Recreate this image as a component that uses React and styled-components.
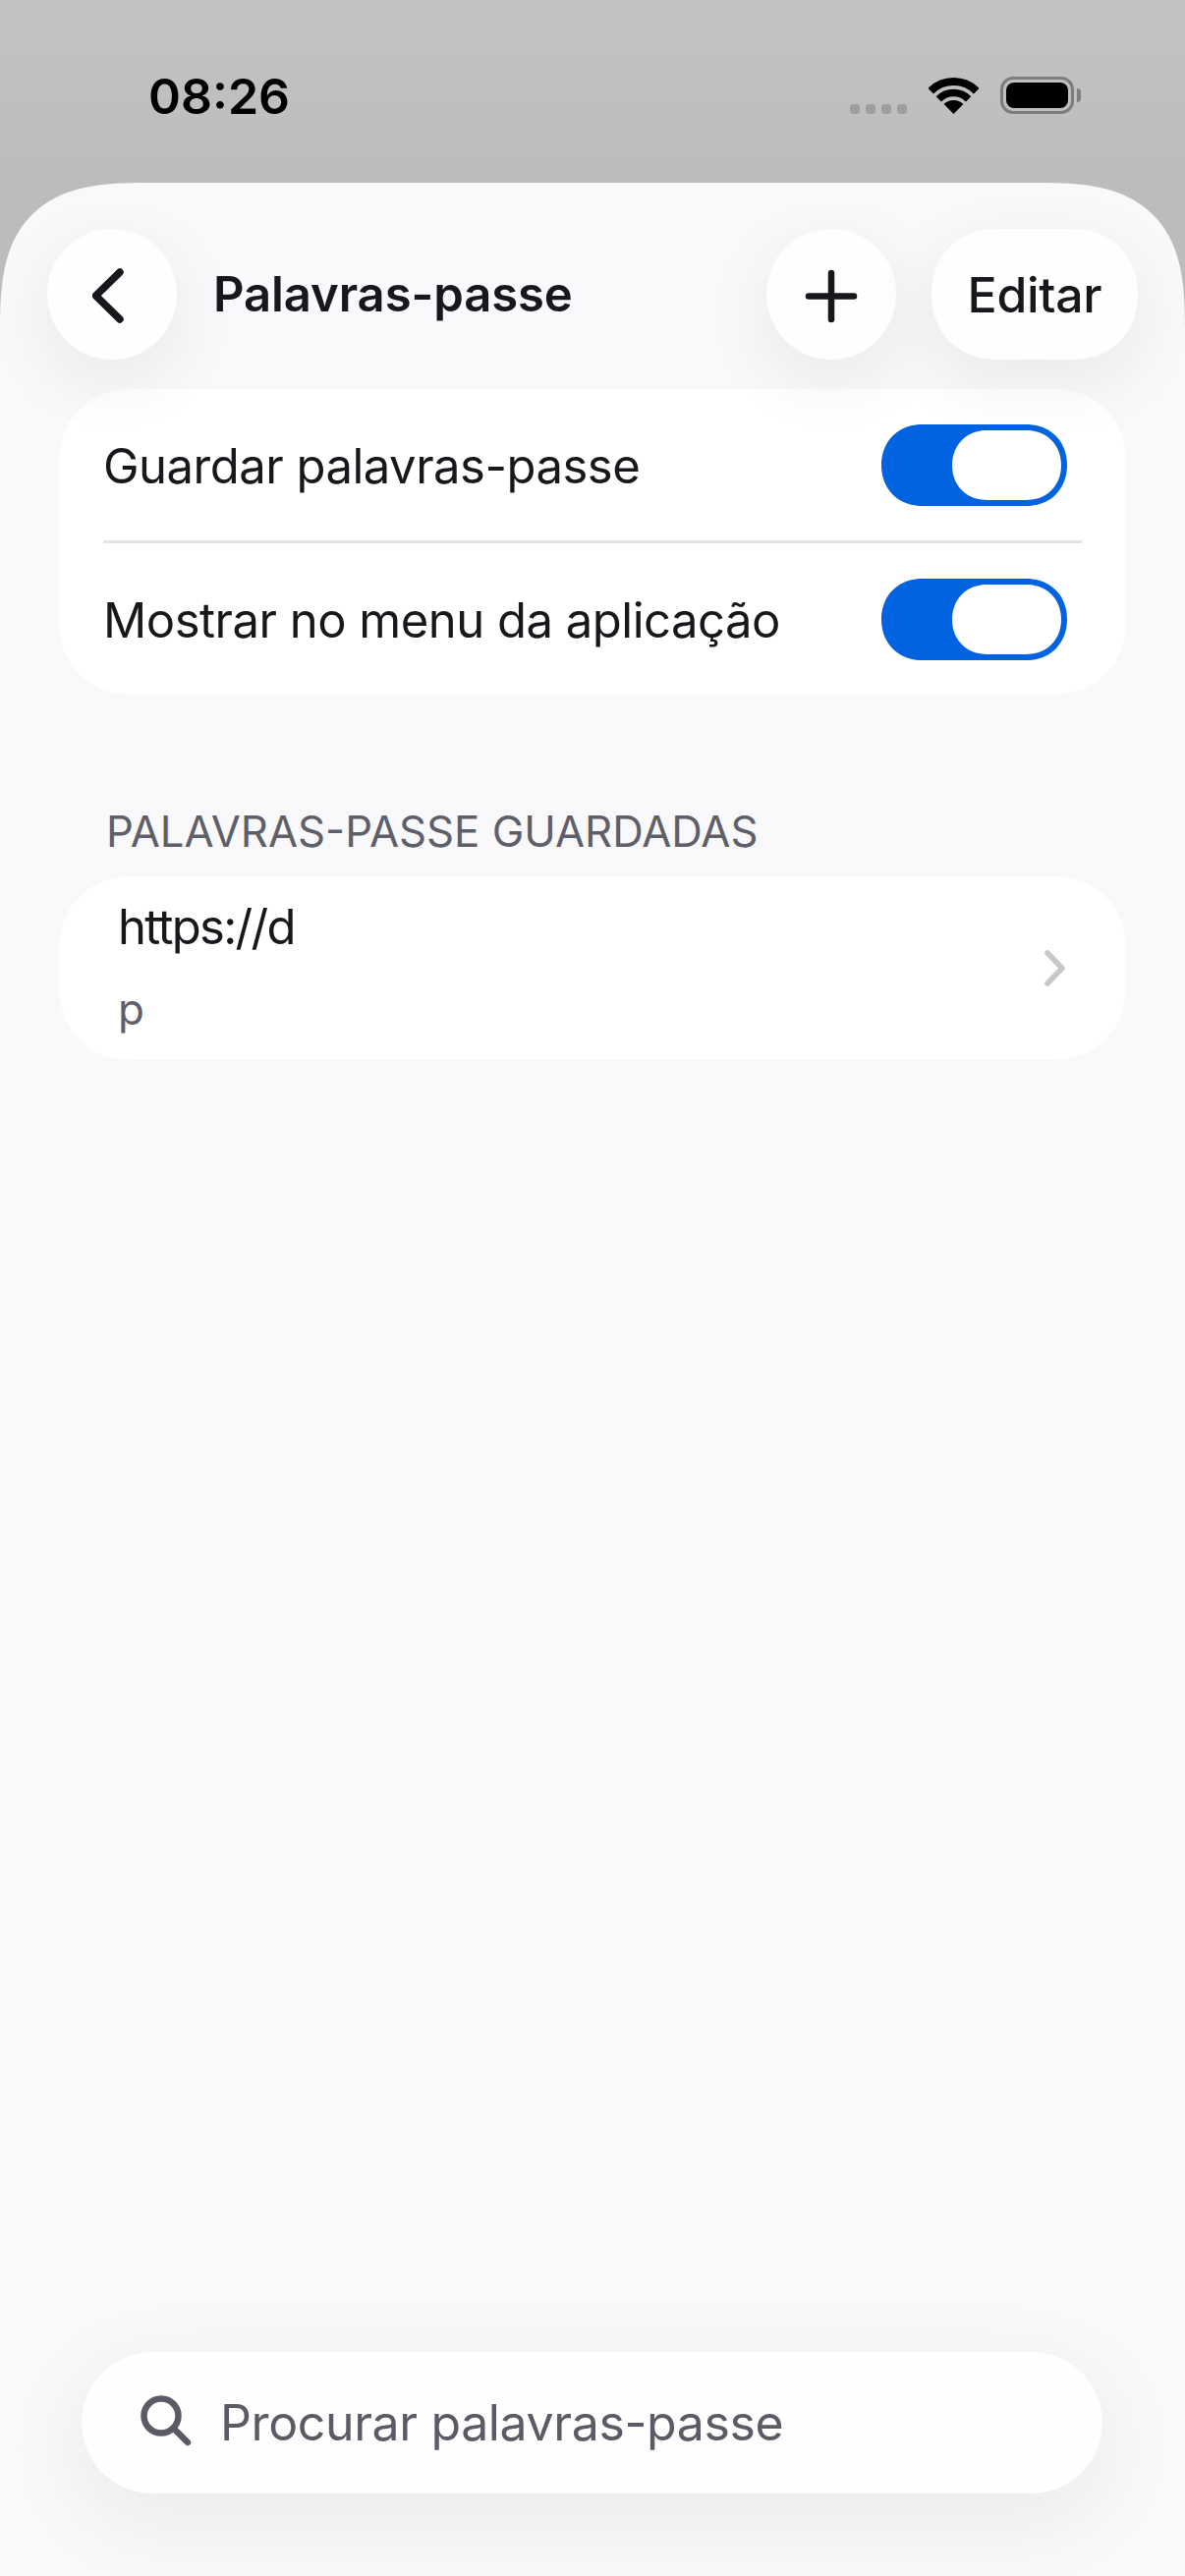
import React from "react";
import styled, { createGlobalStyle } from "styled-components";

const Global = createGlobalStyle`
  html, body { margin: 0; padding: 0; background: #f9f9fb; }
  * { box-sizing: border-box; }
`;

const Screen = styled.div`
  width: 1206px;
  height: 2622px;
  display: flex;
  flex-direction: column;
  overflow: hidden;
  font-family: Inter, "Noto Sans", sans-serif;
  color: #17171c;
  background: linear-gradient(180deg, #c3c3c5 0, #bcbcbe 186px, #bcbcbe 340px);
`;

const StatusBar = styled.div`
  height: 186px;
  flex: none;
  display: flex;
  align-items: flex-start;
  padding: 68px 113px 0 151px;
`;

const Clock = styled.div`
  font-size: 50px;
  line-height: 60px;
  font-weight: 600;
  color: #000;
`;

const StatusIcons = styled.div`
  margin-left: auto;
  display: flex;
  align-items: flex-start;
  padding-top: 10px;
`;

const Dots = styled.div`
  display: flex;
  gap: 6px;
  margin-top: 28px;
  margin-right: 22px;
`;

const Dot = styled.span`
  width: 10px;
  height: 10px;
  border-radius: 3px;
  background: #9e9e9f;
`;

const Wifi = styled.svg`
  width: 51px;
  height: 37px;
  margin-top: 1px;
  margin-right: 22px;
`;

const Battery = styled.div`
  width: 75px;
  height: 38px;
  border: 3px solid #7d7d7f;
  border-radius: 13px;
  padding: 3px;
  position: relative;
  &::after {
    content: "";
    position: absolute;
    right: -10px;
    top: 9px;
    width: 4px;
    height: 14px;
    border-radius: 0 6px 6px 0;
    background: #7d7d7f;
  }
`;

const BatteryFill = styled.div`
  width: 100%;
  height: 100%;
  border-radius: 8px;
  background: #000;
`;

const Sheet = styled.main`
  flex: 1;
  display: flex;
  flex-direction: column;
  background: #f9f9fb;
  border-radius: 150px 150px 0 0;
  corner-shape: superellipse(1.5);
`;

const Header = styled.header`
  display: flex;
  align-items: center;
  padding: 47px 48px 0;
  position: relative;
  z-index: 2;
`;

const RoundButton = styled.button`
  height: 133px;
  width: ${(p) => p.$w || 132}px;
  flex: none;
  border: 0;
  padding: 0;
  margin: 0;
  display: flex;
  align-items: center;
  justify-content: center;
  border-radius: 66px;
  background: #fefeff;
  color: #17171c;
  box-shadow: 0 22px 70px rgba(30, 30, 40, 0.07);
  font: 500 50px/58px Inter, sans-serif;
  letter-spacing: -0.3px;
  ${(p) => (p.$w ? "corner-shape: superellipse(1.08);" : "")}
`;

const Title = styled.h1`
  margin: 0 0 0 37px;
  font-size: 49px;
  line-height: 58px;
  font-weight: 600;
  letter-spacing: -0.1px;
`;

const Actions = styled.div`
  margin-left: auto;
  display: flex;
  gap: 36px;
`;

const Card = styled.section`
  margin: 0 60px;
  background: #fff;
  border-radius: 76px;
  corner-shape: superellipse(1.12);
`;

const SettingsCard = styled(Card)`
  margin-top: 30px;
  position: relative;
`;

const Row = styled.div`
  height: 154px;
  display: flex;
  align-items: center;
  justify-content: space-between;
  padding: 0 60px 0 45px;
  font-size: 49px;
  line-height: 58px;
  letter-spacing: -0.5px;
`;

const RowLabel = styled.span`
  position: relative;
  top: 2px;
`;

const Divider = styled.div`
  height: 3px;
  margin: 0 45px;
  background: #e3e3e8;
`;

const Toggle = styled.div`
  width: 189px;
  height: 83px;
  padding: 6px;
  display: flex;
  justify-content: flex-end;
  border-radius: 42px;
  background: #0263e0;
  corner-shape: superellipse(1.08);
`;

const Knob = styled.div`
  width: 111px;
  height: 71px;
  border-radius: 36px;
  background: #fff;
  corner-shape: superellipse(1.08);
`;

const SectionLabel = styled.div`
  padding: 115px 0 21px 48px;
  margin: 0 60px;
  font-size: 43.7px;
  line-height: 49px;
  color: #5f5f69;
`;

const EntryCard = styled(Card)`
  height: 187px;
  display: flex;
  align-items: center;
  justify-content: space-between;
  padding: 0 60px 0 60px;
`;

const EntryText = styled.div`
  display: flex;
  flex-direction: column;
  gap: 30px;
  margin-top: -4px;
`;

const Site = styled.div`
  font-size: 49px;
  line-height: 56px;
  letter-spacing: -1.7px;
`;

const User = styled.div`
  font-size: 44px;
  line-height: 50px;
  color: #5f5f69;
`;

const Chevron = styled.svg`
  width: 25px;
  height: 40px;
  flex: none;
  margin-top: -2px;
`;

const SearchBar = styled.div`
  margin: auto 84px 84px 83px;
  height: 144px;
  display: flex;
  align-items: center;
  gap: 29px;
  padding: 0 0 0 60px;
  border-radius: 72px;
  background: #fefeff;
  box-shadow: 0 24px 90px rgba(30, 30, 40, 0.07);
  font-size: 50px;
  line-height: 60px;
  letter-spacing: -0.38px;
  color: #5b5b66;
`;

const SearchIcon = styled.svg`
  width: 52px;
  height: 52px;
  flex: none;
  margin-top: -4px;
`;

const Toggler = () => (
  <Toggle>
    <Knob />
  </Toggle>
);

export default function App() {
  return (
    <Screen>
      <Global />
      <StatusBar>
        <Clock>08:26</Clock>
        <StatusIcons>
          <Dots>
            <Dot />
            <Dot />
            <Dot />
            <Dot />
          </Dots>
          <Wifi viewBox="0 0 51 37">
            <path d="M2.2 13.7A33 33 0 0 1 48.8 13.7" fill="none" stroke="#000" strokeWidth="8" />
            <path d="M10.3 21.8A21.5 21.5 0 0 1 40.7 21.8" fill="none" stroke="#000" strokeWidth="7.5" />
            <path d="M25.5 37L15.6 27.1A14 14 0 0 1 35.4 27.1Z" fill="#000" />
          </Wifi>
          <Battery>
            <BatteryFill />
          </Battery>
        </StatusIcons>
      </StatusBar>
      <Sheet>
        <Header>
          <RoundButton aria-label="Voltar">
            <svg width="40" height="64" viewBox="0 0 40 64" fill="none" stroke="#17171c" strokeWidth="7.5" strokeLinecap="round" strokeLinejoin="round">
              <path d="M28 9L3.5 33L28 57" />
            </svg>
          </RoundButton>
          <Title>Palavras-passe</Title>
          <Actions>
            <RoundButton aria-label="Adicionar">
              <svg width="60" height="60" viewBox="0 0 60 60" fill="none" stroke="#17171c" strokeWidth="6.5" strokeLinecap="round">
                <path d="M30 8V55M7 31.5H53" />
              </svg>
            </RoundButton>
            <RoundButton $w={210}>Editar</RoundButton>
          </Actions>
        </Header>
        <SettingsCard>
          <Row>
            <RowLabel>Guardar palavras-passe</RowLabel>
            <Toggler />
          </Row>
          <Divider />
          <Row>
            <RowLabel>Mostrar no menu da aplicação</RowLabel>
            <Toggler />
          </Row>
        </SettingsCard>
        <SectionLabel>PALAVRAS-PASSE GUARDADAS</SectionLabel>
        <EntryCard>
          <EntryText>
            <Site>https://d</Site>
            <User>p</User>
          </EntryText>
          <Chevron viewBox="0 0 25 40" fill="none" stroke="#c7c7cb" strokeWidth="5.5" strokeLinecap="round" strokeLinejoin="round">
            <path d="M5 5L20 20.5L5 36" />
          </Chevron>
        </EntryCard>
        <SearchBar>
          <SearchIcon viewBox="0 0 52 52" fill="none" stroke="#5b5b66" strokeWidth="6.5" strokeLinecap="round">
            <circle cx="21" cy="21" r="17.5" />
            <path d="M34 34L48 48" />
          </SearchIcon>
          <span>Procurar palavras-passe</span>
        </SearchBar>
      </Sheet>
    </Screen>
  );
}
